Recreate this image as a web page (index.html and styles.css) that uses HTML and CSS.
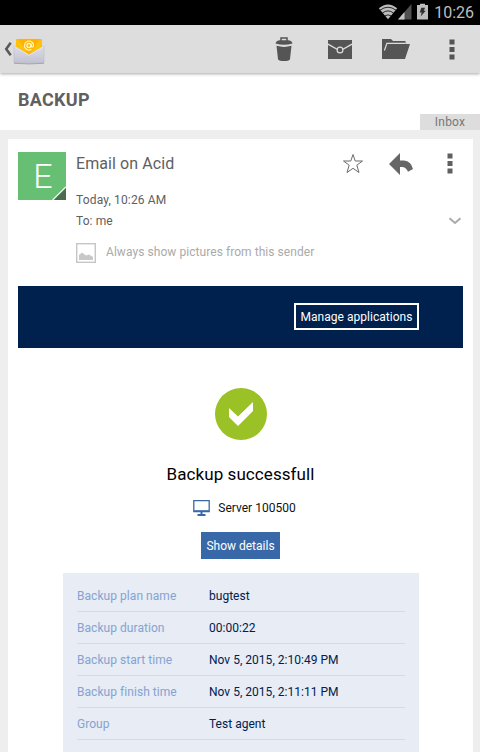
FILE: index.html
```html
<!DOCTYPE html>
<html lang="en">
<head>
<meta charset="utf-8">
<title>BACKUP</title>
<link rel="stylesheet" href="styles.css">
</head>
<body>
<div class="screen">
  <div class="status">
    <svg class="status-icons" width="51" height="18" viewBox="0 0 51 18">
      <path d="M0.8 5.2Q10 -2.4 19.2 5.2L10 16.3Z" fill="#bdbdbd"/>
      <path d="M2 7.2Q10 1.2 18 7.2M4.4 10Q10 5.8 15.6 10M6.9 12.9Q10 10.8 13.1 12.9" fill="none" stroke="#000" stroke-width=".8"/>
      <path d="M20 16.500L33.500 1V16.500Z" fill="#505050"/>
      <path d="M20 16.500L26.500 9V16.500Z" fill="#c4c4c4"/>
      <path d="M39 2H42V.8h5v1.200H50V16.500H39Z" fill="#bdbdbd"/>
      <path d="M43.300 4.800H47L45.900 7.700H47.800L42.600 13.500L43.700 9.600H41.700Z" fill="#303030"/>
    </svg>
    <span class="clock">10:26</span>
  </div>
  <div class="actionbar">
    <svg class="back" width="9" height="14" viewBox="0 0 9 14"><path d="M7.700 .8L3.200 7L7.700 13.200" fill="none" stroke="#585858" stroke-width="2.500"/></svg>
    <svg class="app" width="32" height="30" viewBox="0 0 32 30">
      <defs><linearGradient id="paper" x2="0" y2="1"><stop stop-color="#dedeea"/><stop offset="1" stop-color="#c0c0d0"/></linearGradient></defs>
      <circle cx="16" cy="10" r="8.500" fill="#f4d6c0"/>
      <path d="M1 12L4 9V6H28V9L31 12V28H1Z" fill="#c9c9d2"/>
      <path d="M3 4H29V15L16 23L3 15Z" fill="#fec20d"/>
      <path d="M5 4L16 20L27 4Z" fill="#ffb300"/>
      <path d="M1 11L16 20L31 11V28Q16 29 1 28Z" fill="url(#paper)" stroke="#b4b4c2" stroke-width=".5"/>
      <path d="M1.500 11.500L16 20.200L30.500 11.500" fill="none" stroke="#f0f0f6" stroke-width=".8"/>
      <circle cx="16" cy="10.500" r="2" fill="none" stroke="#fff8cc" stroke-width="1.300"/>
      <path d="M18 8.500V11.500Q20.500 13 20.500 10A4.500 4.500 0 1 0 18.500 14.300" fill="none" stroke="#fff8cc" stroke-width="1.200"/>
      <path d="M1 28.300Q16 29.600 31 28.300" fill="none" stroke="#9d9da8" stroke-width=".8"/>
    </svg>
    <div class="actions">
      <svg width="18" height="24" viewBox="0 0 18 24">
        <path d="M6 4V1H12V4" fill="none" stroke="#555" stroke-width="1.500"/>
        <path d="M.5 6.500Q1 3.500 5 3.200H13Q17 3.500 17.500 6.500Q9 9.200 .5 6.500Z" fill="#555"/>
        <path d="M1.500 8.800Q9 11 16.500 8.800L15 22Q14.800 24 9 24T3 22Z" fill="#555"/>
      </svg>
      <svg class="mail" width="24" height="19" viewBox="0 0 24 19">
        <rect width="24" height="19" fill="#555"/>
        <path d="M0 4.200L9.500 9.500M24 4.200L14.500 9.500" stroke="#ddd" stroke-width="1.400"/>
        <circle cx="12" cy="10" r="2.900" fill="#555" stroke="#ddd" stroke-width="1.200"/>
      </svg>
      <svg width="28" height="20" viewBox="0 0 28 20">
        <path d="M0 20V0H9L11 2H23.500V5H28L23 20Z" fill="#555"/>
        <path d="M2.400 11.500L4.900 4.300H23.500" fill="none" stroke="#ddd" stroke-width="1.200"/>
      </svg>
      <svg width="6" height="21" viewBox="0 0 6 21"><path d="M.5 .5h5v5h-5zM.5 8h5v5h-5zM.5 15.500h5v5h-5z" fill="#555"/></svg>
    </div>
  </div>
  <div class="subject"><h1>BACKUP</h1><span class="folder">Inbox</span></div>
  <div class="card">
    <div class="head">
      <div class="avatar"><span>E</span><svg class="corner" width="14" height="14" viewBox="0 0 14 14"><path d="M14 1V14H1Z" fill="#4b6d4f"/><path d="M.7 14L14 .7" stroke="#e4f2e5" stroke-width="1.400"/></svg></div>
      <div class="meta">
        <div class="from"><span>Email on Acid</span></div>
        <div class="line date"><span>Today, 10:26 AM</span></div>
        <div class="line to"><span>To: me</span>
          <svg width="14" height="8" viewBox="0 0 14 8"><path d="M1.500 1.200L7 6L12.500 1.200" fill="none" stroke="#aaa" stroke-width="2"/></svg>
        </div>
        <div class="pictures">
          <svg width="20" height="20" viewBox="0 0 20 20"><rect x=".7" y=".7" width="18.600" height="18.600" fill="none" stroke="#c6c6c6" stroke-width="1.400"/><path d="M3 17V12L6 9.500L10 12.500L13 11.500L17 14V17Z" fill="#c8c8c8"/></svg>
          <span>Always show pictures from this sender</span>
        </div>
      </div>
      <div class="tools">
        <svg width="22" height="21" viewBox="0 0 22 21"><path d="M11 1.500L13.200 8H20.500L14.800 12.200L17 19.500L11 15.300L5 19.500L7.200 12.200L1.500 8H8.800Z" fill="#fff" stroke="#6b6b6b"/></svg>
        <svg class="reply" width="24" height="22" viewBox="0 0 24 22"><path d="M0 11L11 0V7.500H15Q22 8 24 16L19 18.800Q17 14 13 14H11V22Z" fill="#666"/></svg>
        <svg class="more" width="6" height="21" viewBox="0 0 6 21"><path d="M.5 .5h5v5h-5zM.5 8h5v5h-5zM.5 15.500h5v5h-5z" fill="#606060"/></svg>
      </div>
    </div>
    <div class="message">
      <div class="banner"><span class="manage"><span>Manage applications</span></span></div>
      <svg class="ok" width="52" height="52" viewBox="0 0 52 52"><circle cx="26" cy="26" r="26" fill="#9ac125"/><path d="M14 20L23 28.500L38 14V23L23 38L14 29Z" fill="#fff"/></svg>
      <div class="result"><span>Backup successfull</span></div>
      <div class="server">
        <svg width="17" height="16" viewBox="0 0 17 16"><path d="M.8 .5H16.200V11.500H.8Z" fill="none" stroke="#3968a9" stroke-width="1.300"/><path d="M1 10.300H16V12H1ZM7.500 12H9.500V14H12.500V16H4.500V14H7.500Z" fill="#3968a9"/></svg>
        <span>Server 100500</span>
      </div>
      <div class="button"><span>Show details</span></div>
      <div class="details">
        <div class="row"><span class="key">Backup plan name</span><span>bugtest</span></div>
        <div class="row"><span class="key">Backup duration</span><span>00:00:22</span></div>
        <div class="row"><span class="key">Backup start time</span><span>Nov 5, 2015, 2:10:49 PM</span></div>
        <div class="row"><span class="key">Backup finish time</span><span>Nov 5, 2015, 2:11:11 PM</span></div>
        <div class="row"><span class="key">Group</span><span>Test agent</span></div>
      </div>
    </div>
  </div>
</div>
</body>
</html>
```
FILE: styles.css
```css
* { box-sizing: border-box; }
body { margin: 0; font-family: Roboto, sans-serif; font-size: 12px; color: #606060; background: #eee; }
svg { display: block; flex: none; }
.screen { width: 480px; height: 752px; overflow: hidden; display: flex; flex-direction: column; }
.status { height: 25px; flex: none; background: #000; display: flex; justify-content: flex-end; padding: 3px 6px 0 0; }
.status-icons { margin-right: 5px; }
.clock { font-size: 16px; line-height: 19px; color: #bebebe; }
.actionbar { height: 48px; flex: none; background: #ddd; display: flex; align-items: center; padding-left: 3px; box-shadow: 0 1px 3px rgba(0,0,0,.35); z-index: 1; }
.app { margin-left: 1px; margin-top: 1px; }
.actions { margin-left: auto; display: grid; grid-template-columns: repeat(4, 56px); justify-items: center; align-items: center; }
.mail { margin-top: 1px; }
.subject { height: 57px; flex: none; background: #fff; display: flex; justify-content: space-between; padding-left: 18px; }
h1 { margin: 16px 0 0; font-size: 18px; line-height: 22px; font-weight: 700; letter-spacing: .3px; color: #606060; }
.folder { align-self: flex-end; width: 60px; height: 16px; background: #ddd; color: #777; text-align: center; line-height: 16px; letter-spacing: .2px; }
.card { margin: 9px 7px 0 8px; flex: 1; background: #fff; padding: 13px 10px 0; overflow: hidden; }
.head { display: grid; grid-template-columns: 58px 1fr; height: 134px; position: relative; }
.avatar { width: 48px; height: 48px; background: #67bf74; position: relative; display: flex; justify-content: center; padding-left: 2px; }
.avatar span { color: #fff; font-size: 34px; line-height: 49px; font-weight: 300; }
.corner { position: absolute; right: 0; bottom: 0; }
.from { font-size: 16px; line-height: 22px; height: 38px; padding-top: 1px; letter-spacing: .08px; }
.line { height: 21px; line-height: 20px; display: flex; justify-content: space-between; }
.date { letter-spacing: .15px; }
.to { letter-spacing: .1px; }
.to svg { margin: 6px 1px 0 0; }
.pictures { display: flex; align-items: center; height: 20px; margin-top: 11px; gap: 10px; color: #aaa; letter-spacing: .06px; }
.pictures span { margin-top: -2px; }
.tools { position: absolute; right: 10px; top: 1px; display: flex; }
.tools .reply { margin: 0 0 0 25px; }
.more { margin-left: 34px; }
.message { display: flex; flex-direction: column; align-items: center; color: #111; }
.banner { width: 445px; height: 62px; background: #00204d; display: flex; align-items: center; justify-content: flex-end; padding-right: 44px; }
.manage { width: 125px; height: 27px; border: 2px solid #fff; color: #fff; text-align: center; line-height: 24px; margin-top: -1px; letter-spacing: .03px; }
.ok { margin-top: 40px; }
.result { font-size: 17px; line-height: 24px; margin-top: 22px; color: #000; letter-spacing: .08px; }
.server { display: flex; align-items: center; gap: 8px; height: 18px; margin: 13px 0 0 8px; }
.button { width: 79px; height: 27px; margin-top: 15px; background: #3968a9; color: #fff; text-align: center; line-height: 28px; }
.details { width: 356px; height: 200px; margin-top: 14px; background: #e7ecf5; padding: 7px 14px 0; color: #00204d; }
.row { height: 32px; border-bottom: 1px solid #cddcee; display: grid; grid-template-columns: 132px 1fr; line-height: 32px; letter-spacing: .02px; }
.row span { padding-left: .5px; }
.key { color: #85a3d1; letter-spacing: .05px; }
```
